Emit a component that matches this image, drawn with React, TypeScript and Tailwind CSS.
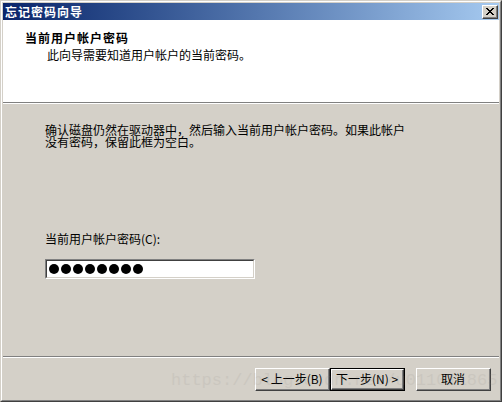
import React from 'react';

const cjk = { fontFamily: '"Noto Sans CJK SC", "Noto Sans", sans-serif' };

function WinButton({ label, isDefault }: { label: string; isDefault?: boolean }) {
    const inner = (
        <div className="h-full w-full border-t border-l border-t-white border-l-white border-r border-b border-r-[#404040] border-b-[#404040]">
            <div className="h-full w-full border-r border-b border-r-[#808080] border-b-[#808080] flex items-center justify-center text-[12px] text-black leading-none">
                {label}
            </div>
        </div>
    );
    if (isDefault) {
        return <div className="w-[75px] h-[23px] border border-black">{inner}</div>;
    }
    return <div className="w-[75px] h-[23px]">{inner}</div>;
}

function CloseButton() {
    return (
        <div className="w-[16px] h-[14px] bg-[#d4d0c8] border-t border-l border-t-white border-l-white border-r border-b border-r-[#404040] border-b-[#404040]">
            <div className="h-full w-full border-r border-b border-r-[#808080] border-b-[#808080] flex items-center justify-center">
                <svg width="8" height="7" viewBox="0 0 8 7" shapeRendering="crispEdges">
                    <path d="M0 0h2v1h-2zM6 0h2v1h-2zM1 1h2v1h-2zM5 1h2v1h-2zM2 2h4v1h-4zM3 3h2v1h-2zM2 4h4v1h-4zM1 5h2v1h-2zM5 5h2v1h-2zM0 6h2v1h-2zM6 6h2v1h-2z" fill="#000" />
                </svg>
            </div>
        </div>
    );
}

export default function App() {
    return (
        <div className="w-[502px] h-[402px] relative overflow-hidden" style={cjk}>
            <div className="w-full h-full border-t border-l border-t-[#d4d0c8] border-l-[#d4d0c8] border-r border-b border-r-[#404040] border-b-[#404040]">
                <div className="w-full h-full border-t border-l border-t-white border-l-white border-r border-b border-r-[#808080] border-b-[#808080]">
                    <div className="w-full h-full p-px bg-[#d4d0c8] flex flex-col">
                        {/* title bar */}
                        <div className="h-[17px] shrink-0 bg-gradient-to-r from-[#0a246a] to-[#a6caf0] flex items-center justify-between pl-[2px] pr-[1px]">
                            <span className="text-white font-bold text-[12px] tracking-[1px] leading-none">忘记密码向导</span>
                            <CloseButton />
                        </div>

                        {/* header */}
                        <div className="h-[82px] shrink-0 bg-white pt-[11px] pl-[22px]">
                            <div className="text-[12px] font-bold tracking-[1px] leading-[13px] text-black">当前用户帐户密码</div>
                            <div className="text-[12px] leading-[13px] text-black pl-[22px] mt-[4px]">此向导需要知道用户帐户的当前密码。</div>
                        </div>
                        <div className="h-px shrink-0 bg-[#808080]" />
                        <div className="h-px shrink-0 bg-white" />

                        {/* body */}
                        <div className="flex-1 flex flex-col pl-[42px] pt-[20px]">
                            <div className="text-[12px] leading-[12px] text-black">
                                <div>确认磁盘仍然在驱动器中，然后输入当前用户帐户密码。如果此帐户</div>
                                <div>没有密码，保留此框为空白。</div>
                            </div>
                            <div className="mt-[84px] text-[12px] leading-[13px] text-black">当前用户帐户密码(C):</div>
                            <div className="mt-[14px] w-[210px] h-[20px] border-t border-l border-t-[#808080] border-l-[#808080] border-r border-b border-r-white border-b-white">
                                <div className="w-full h-full bg-white border-t border-l border-t-[#404040] border-l-[#404040] border-r border-b border-r-[#d4d0c8] border-b-[#d4d0c8] flex items-center gap-[2px] pl-[2px]">
                                    {Array.from({ length: 8 }).map((_, i) => (
                                        <div key={i} className="w-[10px] h-[10px] rounded-full bg-black" />
                                    ))}
                                </div>
                            </div>
                        </div>

                        <div className="h-px shrink-0 bg-[#808080]" />
                        <div className="h-px shrink-0 bg-white" />

                        {/* buttons */}
                        <div className="h-[41px] shrink-0 flex items-start justify-end pt-[10px] pr-[8px]">
                            <WinButton label="< 上一步(B)" />
                            <WinButton label="下一步(N) >" isDefault />
                            <div className="w-[11px]" />
                            <WinButton label="取消" />
                        </div>
                    </div>
                </div>
            </div>
            <div
                className="absolute left-[171px] top-[368px] text-[17px] text-[#8a8680] opacity-[0.12] pointer-events-none whitespace-nowrap"
                style={{ fontFamily: '"Liberation Mono", monospace' }}
            >
                https://blog.csdn.net/u011011865
            </div>
        </div>
    );
}
